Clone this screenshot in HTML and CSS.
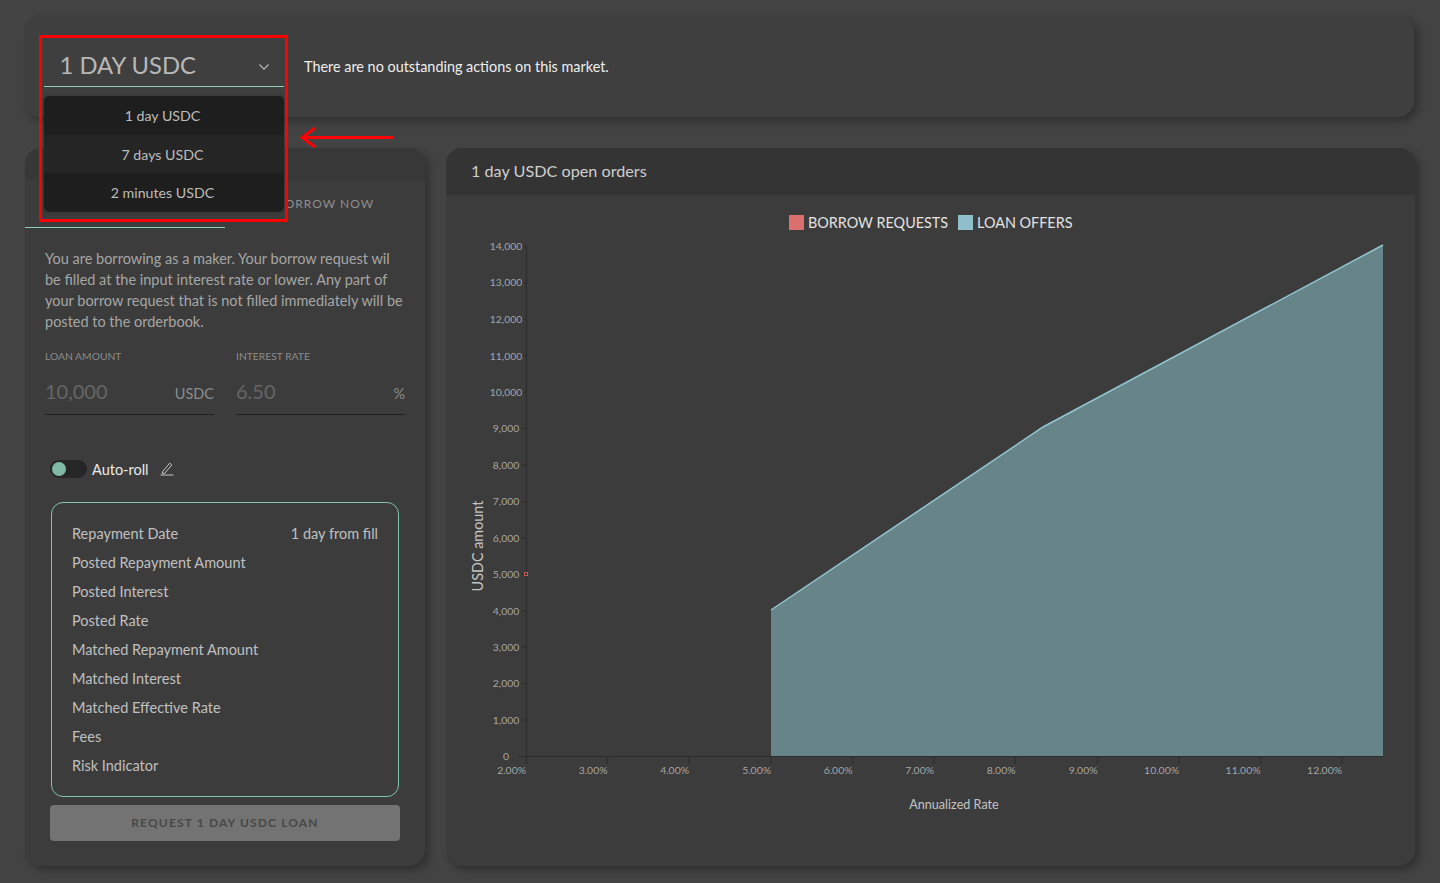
FILE: index.html
```html
<!DOCTYPE html>
<html lang="en">
<head>
    <meta charset="UTF-8">
    <meta name="viewport" content="width=device-width, initial-scale=1.0">
    <title>1 day USDC</title>
    <link rel="stylesheet" href="styles.css">
</head>
<body>

    <div class="page">

        <section class="card market-bar">
            <div class="market-select">
                <div class="market-current">
                    <span>1 DAY USDC</span>
                    <svg class="chevron" width="12" height="8" viewBox="0 0 12 8"><path d="M1.5 1.5 L6 6.2 L10.5 1.5" fill="none" stroke="#b8b8b8" stroke-width="1.2"/></svg>
                </div>
                <ul class="market-menu">
                    <li>1 day USDC</li>
                    <li>7 days USDC</li>
                    <li>2 minutes USDC</li>
                </ul>
            </div>
            <p class="market-note">There are no outstanding actions on this market.</p>
        </section>

        <div class="columns">

            <section class="card borrow-card">
                <div class="borrow-head"></div>
                <div class="tabs">
                    <div class="tab active"></div>
                    <div class="tab">BORROW NOW</div>
                </div>
                <div class="borrow-body">
                    <p class="intro">You are borrowing as a maker. Your borrow request wil be filled at the input interest rate or lower. Any part of your borrow request that is not filled immediately will be posted to the orderbook.</p>

                    <div class="fields">
                        <div class="field">
                            <label>LOAN AMOUNT</label>
                            <div class="field-input"><span class="field-value">10,000</span><span class="field-unit">USDC</span></div>
                        </div>
                        <div class="field">
                            <label>INTEREST RATE</label>
                            <div class="field-input"><span class="field-value">6.50</span><span class="field-unit">%</span></div>
                        </div>
                    </div>

                    <div class="autoroll">
                        <span class="toggle"><span class="knob"></span></span>
                        <span class="autoroll-label">Auto-roll</span>
                        <svg width="14" height="14" viewBox="0 0 14 14" fill="none" stroke="#c8c8c8" stroke-width="1"><path d="M2.6 9.6 L9.6 1.2 L11.8 3 L4.8 11.2 L2.2 11.6 Z"/><path d="M0.5 13 H13.5"/></svg>
                    </div>

                    <div class="summary">
                        <div class="summary-row"><span>Repayment Date</span><span>1 day from fill</span></div>
                        <div class="summary-row"><span>Posted Repayment Amount</span></div>
                        <div class="summary-row"><span>Posted Interest</span></div>
                        <div class="summary-row"><span>Posted Rate</span></div>
                        <div class="summary-row"><span>Matched Repayment Amount</span></div>
                        <div class="summary-row"><span>Matched Interest</span></div>
                        <div class="summary-row"><span>Matched Effective Rate</span></div>
                        <div class="summary-row"><span>Fees</span></div>
                        <div class="summary-row"><span>Risk Indicator</span></div>
                    </div>

                    <button class="request-btn" disabled>REQUEST 1 DAY USDC LOAN</button>
                </div>
            </section>

            <section class="card orders-card">
                <h2 class="orders-head">1 day USDC open orders</h2>
                <!-- viewBox uses page coordinates so the chart numbers read straight off the screenshot -->
                <svg class="chart" width="969" height="671" viewBox="446 195 969 671">
                    <rect x="789" y="215" width="15" height="15" fill="#d9706e"/>
                    <text class="legend" x="808" y="228">BORROW REQUESTS</text>
                    <rect x="958" y="215" width="15" height="15" fill="#8fbfc8"/>
                    <text class="legend" x="977" y="228">LOAN OFFERS</text>

                    <polygon points="771,610 1043,427 1383,245 1383,756 771,756" fill="#678589"/>
                    <polyline points="771,610 1043,427 1383,245" fill="none" stroke="#93c6d0" stroke-width="1.5"/>

                    <path class="axis" d="M526.5 245 V764 M518 756.5 H1383"/>
                    <path class="axis" d="M521 246.5 H526 M521 283 H526 M521 319.5 H526 M521 356 H526 M521 392.5 H526 M521 428.5 H526 M521 465 H526 M521 501.5 H526 M521 538 H526 M521 574.5 H526 M521 611 H526 M521 647 H526 M521 683.5 H526 M521 720 H526"/>
                    <path class="axis" d="M607.5 756 V764 M689 756 V764 M771 756 V764 M852.5 756 V764 M934 756 V764 M1015.5 756 V764 M1097.5 756 V764 M1179 756 V764 M1260.5 756 V764 M1342 756 V764"/>
                    <rect x="524.5" y="572.5" width="3" height="3" fill="none" stroke="#c25a5a"/>

                    <g class="tick-y">
                        <text x="506" y="250">14,000</text>
                        <text x="506" y="286">13,000</text>
                        <text x="506" y="323">12,000</text>
                        <text x="506" y="360">11,000</text>
                        <text x="506" y="396">10,000</text>
                        <text x="506" y="432">9,000</text>
                        <text x="506" y="469">8,000</text>
                        <text x="506" y="505">7,000</text>
                        <text x="506" y="542">6,000</text>
                        <text x="506" y="578">5,000</text>
                        <text x="506" y="615">4,000</text>
                        <text x="506" y="651">3,000</text>
                        <text x="506" y="687">2,000</text>
                        <text x="506" y="724">1,000</text>
                        <text x="506" y="760">0</text>
                    </g>
                    <g class="tick-x">
                        <text x="526" y="774">2.00%</text>
                        <text x="607.5" y="774">3.00%</text>
                        <text x="689" y="774">4.00%</text>
                        <text x="771" y="774">5.00%</text>
                        <text x="852.5" y="774">6.00%</text>
                        <text x="934" y="774">7.00%</text>
                        <text x="1015.5" y="774">8.00%</text>
                        <text x="1097.5" y="774">9.00%</text>
                        <text x="1179" y="774">10.00%</text>
                        <text x="1260.5" y="774">11.00%</text>
                        <text x="1342" y="774">12.00%</text>
                    </g>

                    <text class="axis-title" x="954" y="809">Annualized Rate</text>
                    <text class="axis-title y-title" transform="translate(483 546) rotate(-90)">USDC amount</text>
                </svg>
            </section>

        </div>

        <!-- red annotation drawn over the screenshot -->
        <div class="note-box"></div>
        <svg class="note-arrow" width="98" height="24" viewBox="0 0 98 24"><path d="M95 11.5 H3 M16 2 L3 11.5 L16 21" fill="none" stroke="#f00" stroke-width="2.8"/></svg>

    </div>

</body>
</html>
```

FILE: styles.css
```css
* {
    box-sizing: border-box;
}

body {
    margin: 0;
    height: 883px;
    overflow: hidden;
    background: #434343;
    font-family: Lato, "Open Sans", sans-serif;
    font-size: 14.5px;
    color: #c8c8c8;
}

.page {
    position: relative;
    padding: 15px 0 0 24px;
}

.card {
    background: #3c3c3c;
    border-radius: 16px;
    box-shadow: 4px 4px 8px rgba(0, 0, 0, 0.3), -3px -3px 8px rgba(255, 255, 255, 0.02);
}

/* top bar */
.market-bar {
    display: flex;
    align-items: flex-start;
    gap: 20px;
    width: 1390px;
    height: 102px;
    padding: 24px 0 0 20px;
    background: #3f3f3f;
}

.market-select {
    position: relative;
    width: 240px;
}

.market-current {
    display: flex;
    justify-content: space-between;
    align-items: center;
    height: 48px;
    padding: 5px 14px 0 15.5px;
    border-bottom: 1px solid #8fd0b8;
    font-size: 23.8px;
    color: #b8b8b8;
}

.chevron {
    margin-top: 3px;
}

.market-menu {
    position: absolute;
    z-index: 2;
    top: 57px;
    left: 0;
    width: 240px;
    margin: 0;
    padding: 0;
    list-style: none;
    overflow: hidden;
    border-radius: 5px;
    background: #1e1e1e;
    box-shadow: 0 0 4px rgba(0, 0, 0, 0.2);
}

.market-menu li {
    height: 38.6px;
    padding-right: 3px;
    font-size: 14.2px;
    line-height: 39px;
    text-align: center;
    color: #bdbdbd;
}

.market-menu li:nth-child(2) {
    background: #252525;
}

.market-note {
    margin: 0;
    font-size: 14.4px;
    line-height: 56px;
    color: #eee;
}

/* two columns */
.columns {
    display: grid;
    grid-template-columns: 400px 969px;
    gap: 21px;
    margin: 31px 0 0 1px;
}

.borrow-card,
.orders-card {
    height: 718px;
    overflow: hidden;
}

/* left card */
.borrow-head {
    height: 32px;
    background: #383838;
}

.tabs {
    display: flex;
    height: 48px;
}

.tab {
    width: 200px;
    padding-top: 16px;
    text-align: center;
    font-size: 12px;
    letter-spacing: 1px;
    color: #8f8f8f;
}

.tab.active {
    border-bottom: 1px solid #8fd0b8;
}

.borrow-body {
    padding: 20px 20px 0;
}

.intro {
    margin: 0;
    line-height: 21px;
    color: #a6a6a6;
}

.fields {
    display: grid;
    grid-template-columns: 169px 169px;
    gap: 22px;
    margin-top: 18px;
}

.field label {
    display: block;
    font-size: 10.3px;
    line-height: 13px;
    color: #8c8c8c;
}

.field-input {
    display: flex;
    justify-content: space-between;
    align-items: flex-end;
    height: 52px;
    padding-bottom: 10px;
    border-bottom: 1px solid #222;
}

.field-value {
    font-size: 20px;
    line-height: 26px;
    color: #666;
}

.field-unit {
    margin-bottom: 1px;
    line-height: 18px;
    color: #8c8c8c;
}

.autoroll {
    display: flex;
    align-items: center;
    height: 18px;
    margin: 45px 0 0 5px;
}

.toggle {
    display: flex;
    align-items: center;
    width: 37px;
    height: 18px;
    padding-left: 2px;
    border-radius: 9px;
    background: #262626;
}

.knob {
    width: 14px;
    height: 14px;
    border-radius: 50%;
    background: #82b9a6;
}

.autoroll-label {
    margin: 0 11px 0 5px;
    color: #eaeaea;
}

.summary {
    width: 348px;
    height: 295px;
    margin: 24px 0 8px 6px;
    padding: 16px 20px 0;
    border: 1px solid #7fc4ac;
    border-radius: 12px;
}

.summary-row {
    display: flex;
    justify-content: space-between;
    height: 29px;
    line-height: 29px;
    color: #c0c0c0;
}

.request-btn {
    display: block;
    width: 350px;
    height: 36px;
    margin-left: 5px;
    padding-bottom: 3px;
    border: none;
    border-radius: 4px;
    background: #737373;
    font-family: inherit;
    font-size: 12px;
    font-weight: 700;
    letter-spacing: 1.15px;
    color: #484848;
}

/* right card */
.orders-head {
    height: 47px;
    margin: 0;
    padding-left: 25px;
    background: #343434;
    font-size: 16.2px;
    font-weight: 400;
    line-height: 45px;
    color: #cfcfcf;
}

.chart {
    display: block;
}

.chart text {
    font-family: Lato, "Open Sans", sans-serif;
}

.chart .legend {
    font-size: 14.4px;
    fill: #e2e2e2;
}

.axis {
    fill: none;
    stroke: #2d2d2d;
    stroke-width: 1.2;
}

.tick-y text {
    font-size: 10.4px;
    text-anchor: middle;
    fill: #a6a6a6;
}

.tick-x text {
    font-size: 10.4px;
    text-anchor: end;
    fill: #a6a6a6;
}

.chart .axis-title {
    font-size: 12.6px;
    text-anchor: middle;
    fill: #c4c4c4;
}

.chart .y-title {
    font-size: 14.4px;
}

/* annotation */
.note-box {
    position: absolute;
    z-index: 3;
    top: 35px;
    left: 39px;
    width: 249px;
    height: 187px;
    border: 3px solid #f00;
}

.note-arrow {
    position: absolute;
    z-index: 3;
    top: 126px;
    left: 299px;
}
```
